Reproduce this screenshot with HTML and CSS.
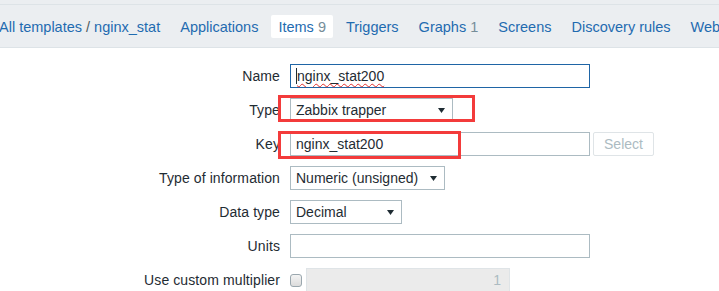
FILE: index.html
```html
<!DOCTYPE html>
<html lang="en">
<head>
  <meta charset="UTF-8" />
  <title>Items</title>
  <link rel="stylesheet" href="styles.css">
</head>
<body>

  <div class="top-strip"></div>
  <div class="tabs">
    <span class="tab crumb">All templates <span class="sep">/</span> nginx_stat</span>
    <span class="tab">Applications</span>
    <span class="tab active">Items <span class="count">9</span></span>
    <span class="tab">Triggers</span>
    <span class="tab">Graphs <span class="count">1</span></span>
    <span class="tab">Screens</span>
    <span class="tab">Discovery rules</span>
    <span class="tab">Web scenarios</span>
  </div>

  <div class="item-form">
    <label class="label">Name</label>
    <div class="field">
      <div class="input wide focused"><span class="caret"></span><span class="misspelled">nginx_stat200</span></div>
    </div>

    <label class="label">Type</label>
    <div class="field">
      <div class="select w-type">
        <span>Zabbix trapper</span>
        <svg class="arrow" width="7" height="5" viewBox="0 0 7 5"><polygon points="0,0 7,0 3.5,5" /></svg>
      </div>
      <span class="mark mark-type"></span>
    </div>

    <label class="label">Key</label>
    <div class="field">
      <div class="input wide">nginx_stat200</div>
      <button class="btn-select">Select</button>
      <span class="mark mark-key"></span>
    </div>

    <label class="label">Type of information</label>
    <div class="field">
      <div class="select w-info">
        <span>Numeric (unsigned)</span>
        <svg class="arrow" width="7" height="5" viewBox="0 0 7 5"><polygon points="0,0 7,0 3.5,5" /></svg>
      </div>
    </div>

    <label class="label">Data type</label>
    <div class="field">
      <div class="select w-data">
        <span>Decimal</span>
        <svg class="arrow" width="7" height="5" viewBox="0 0 7 5"><polygon points="0,0 7,0 3.5,5" /></svg>
      </div>
    </div>

    <label class="label">Units</label>
    <div class="field">
      <div class="input wide"></div>
    </div>

    <label class="label">Use custom multiplier</label>
    <div class="field">
      <span class="checkbox"></span>
      <div class="input disabled">1</div>
    </div>
  </div>

</body>
</html>
```

FILE: styles.css
```css
body {
    font-family: 'Liberation Sans', Arial, sans-serif;
    font-size: 14px;
    color: #1f2c33;
    background: #fff;
    margin: 0;
    overflow: hidden;
  }

  /* header tabs */
  .top-strip {
    height: 4px;
    background-color: #ebeef1;
    border-bottom: 1px solid #dde3e7;
  }

  .tabs {
    display: flex;
    align-items: center;
    gap: 6px;
    height: 41px;
    padding-top: 1px;
    margin-left: -8px;
    background-color: #ebeef1;
    border-bottom: 1px solid #dde3e7;
    white-space: nowrap;
    font-size: 14.5px;
  }

  .tab {
    color: #1f6bb0;
    padding: 4px 7px 3px;
    line-height: 16px;
  }

  .tab.active {
    background-color: #fff;
    border-radius: 2px;
  }

  .count {
    color: #768d99;
  }

  .sep {
    color: #4f5a60;
  }

  /* form */
  .item-form {
    display: grid;
    grid-template-columns: 280px auto;
    grid-auto-rows: 24px;
    column-gap: 10px;
    row-gap: 10px;
    padding-top: 16px;
  }

  .label {
    text-align: right;
    align-self: center;
    white-space: nowrap;
    letter-spacing: 0.1px;
  }

  .field {
    position: relative;
    display: flex;
    align-items: center;
    gap: 3px;
  }

  .input, .select {
    box-sizing: border-box;
    height: 24px;
    border: 1px solid #acbbc2;
    background: #fff;
    padding: 0 5px;
    display: flex;
    align-items: center;
    white-space: nowrap;
  }

  .input.wide {
    width: 300px;
  }

  .input.focused {
    border-color: #1f65a6;
  }

  .caret {
    display: inline-block;
    width: 1px;
    height: 16px;
    background: #1f2c33;
  }

  .misspelled {
    text-decoration: underline wavy #e03030;
    text-decoration-thickness: 1px;
    text-underline-offset: 2px;
  }

  .select {
    justify-content: space-between;
    padding-right: 7px;
  }

  .w-type { width: 163px; }
  .w-info { width: 155px; }
  .w-data { width: 112px; }

  .arrow polygon {
    fill: #1f2c33;
  }

  .btn-select {
    box-sizing: border-box;
    width: 61px;
    height: 24px;
    border: 1px solid #dfe4e7;
    border-radius: 2px;
    background: #fff;
    color: #acbbc2;
    font-family: inherit;
    font-size: 14px;
    padding: 0;
  }

  .checkbox {
    box-sizing: border-box;
    width: 12px;
    height: 13px;
    border: 1px solid #9aa7ae;
    border-radius: 3px;
    background: linear-gradient(#f4f4f4, #dcdcdc);
    margin-right: 1px;
  }

  .input.disabled {
    width: 204px;
    background: #ebebeb;
    border-color: #dfe4e7;
    color: #acbbc2;
    justify-content: flex-end;
    padding-right: 8px;
  }

  /* red highlight boxes drawn over the screenshot */
  .mark {
    position: absolute;
    box-sizing: border-box;
    border: 3px solid #f33b3b;
  }

  .mark-type {
    left: -12px;
    top: -3px;
    width: 197px;
    height: 27px;
  }

  .mark-key {
    left: -12px;
    top: -1px;
    width: 183px;
    height: 28px;
  }
```
